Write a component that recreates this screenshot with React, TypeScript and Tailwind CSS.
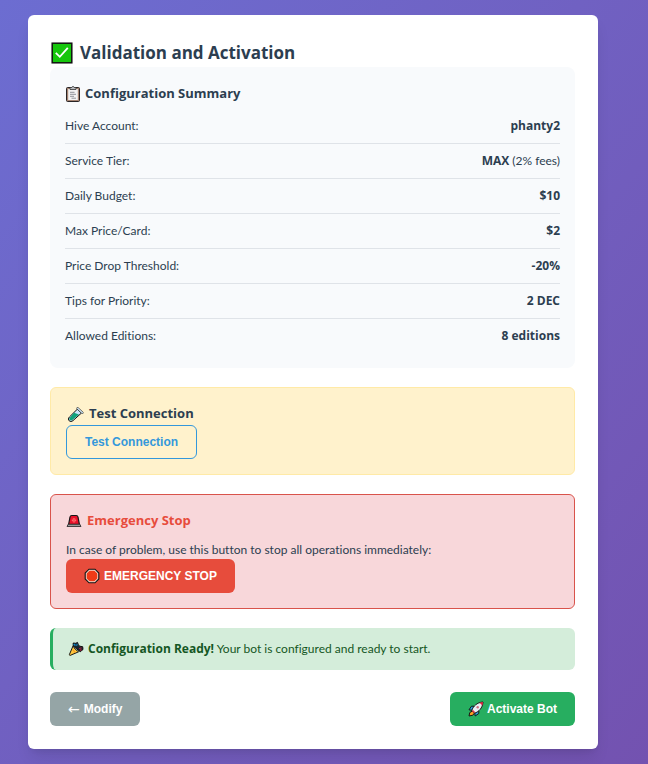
import type { ReactNode } from 'react';

const summary: { label: string; value: ReactNode }[] = [
  { label: 'Hive Account:', value: <Strong>phanty2</Strong> },
  { label: 'Service Tier:', value: <><Strong>MAX</Strong> (2% fees)</> },
  { label: 'Daily Budget:', value: <Strong>$10</Strong> },
  { label: 'Max Price/Card:', value: <Strong>$2</Strong> },
  { label: 'Price Drop Threshold:', value: <Strong>-20%</Strong> },
  { label: 'Tips for Priority:', value: <Strong>2 DEC</Strong> },
  { label: 'Allowed Editions:', value: <Strong>8 editions</Strong> },
];

function Strong({ children }: { children: ReactNode }) {
  return <strong className="font-['Segoe_UI','Open_Sans',sans-serif] font-bold">{children}</strong>;
}

function CheckIcon() {
  return (
    <svg viewBox="0 0 22 22" className="size-[22px] shrink-0" aria-hidden="true">
      <rect x="1.2" y="1.2" width="19.6" height="19.6" fill="#16c60c" stroke="#111" strokeWidth="1.5" />
      <path d="m4.8 10.8 4 4 8-9" fill="none" stroke="#fff" strokeWidth="1.8" />
    </svg>
  );
}

function ClipboardIcon() {
  return (
    <svg viewBox="0 0 16 18" className="h-[18px] w-4 shrink-0" aria-hidden="true">
      <rect x="1.5" y="2.5" width="13" height="14" rx="1" fill="#a58472" stroke="#282425" />
      <rect x="3.2" y="4" width="9.6" height="11" fill="#f3f3f3" />
      <path d="M5 3.8V2.5h1.6a1.5 1.5 0 0 1 2.8 0H11v2H5z" fill="#b9bcc0" stroke="#363636" strokeWidth=".8" />
      <path d="M5 7.3h4.5M5 9.3h6M5 11.3h4M6.5 13.2H11" stroke="#85888e" strokeWidth=".9" />
    </svg>
  );
}

function TubeIcon() {
  return (
    <svg viewBox="0 0 18 17" className="h-[17px] w-[18px] shrink-0" aria-hidden="true">
      <path d="M11.5 3 15.5 7 7 14.6c-1.3 1.1-2.8 1.1-3.8.2s-1-2.6.2-3.8z" fill="#c9e5fb" stroke="#111" />
      <path d="m8 6.8 5 1.6-6.3 5.4c-1.1.9-2.2.9-2.9.2s-.7-1.7.2-2.6z" fill="#10a27b" />
      <path d="m11.6 2.2 4.8 4.6" stroke="#111" strokeWidth="2.2" strokeLinecap="round" />
      <path d="m11.6 2.2 4.8 4.6" stroke="#d8eeff" strokeWidth="1.2" strokeLinecap="round" />
    </svg>
  );
}

function SirenIcon() {
  return (
    <svg viewBox="0 0 16 14" className="h-3.5 w-4 shrink-0" aria-hidden="true">
      <path d="M2.6 10.5 4 3Q4.3 1.5 5.8 1.5h4.4q1.5 0 1.8 1.5l1.4 7.5z" fill="#e8122b" stroke="#151515" strokeWidth="1.2" />
      <path d="M8 4v4.4M5.8 6.2h4.4" stroke="#ff6c6c" strokeWidth="1.4" />
      <path d="m6.5 4.7 3 3m0-3-3 3" stroke="#f84b54" strokeWidth=".8" />
      <path d="M2.2 10.2h11.6l1.2 2.3H1z" fill="#9b9b9b" stroke="#222" strokeWidth=".8" />
    </svg>
  );
}

function StopIcon() {
  return (
    <svg viewBox="0 0 16 16" className="size-4 shrink-0" aria-hidden="true">
      <path d="M5 1.2h6L14.8 5v6L11 14.8H5L1.2 11V5z" fill="#f5dcd0" stroke="#111" strokeWidth="1.1" />
      <path d="M5.6 2.7h4.8l2.9 2.9v4.8l-2.9 2.9H5.6l-2.9-2.9V5.6z" fill="#f03a17" />
    </svg>
  );
}

function PartyIcon() {
  return (
    <svg viewBox="0 0 16 16" className="size-4 shrink-0" aria-hidden="true">
      <path d="m5.2 2 2.6.3 1.7-.9.9 2.5 1.3 1.3 3 .5.3 2.8-2.8 2.2L5.2 5z" fill="#17232d" stroke="#111" strokeLinejoin="round" />
      <path d="M5.8 3 7.5 4.5" stroke="#0c8bc9" strokeWidth="1.6" />
      <path d="m8.4 5 .9-2.3" stroke="#156b9c" strokeWidth="1.4" />
      <path d="m11 7.8 2.6-1M12 9.4l1.5-.8" stroke="#a51b3d" strokeWidth="1.2" />
      <path d="M5 5Q6.8 8.8 10.6 10.8L2.2 14.4Q1.3 14.4 1.4 13.5z" fill="#ffc83d" stroke="#181818" />
      <path d="m4.6 8.5 2.6 3.2" stroke="#f59b23" strokeWidth="1.1" />
    </svg>
  );
}

function RocketIcon() {
  return (
    <svg viewBox="0 0 16 16" className="size-4 shrink-0" aria-hidden="true">
      <path d="M4.5 10 1.8 11.5 1 15l3.8-.8L6.5 12z" fill="#ff9d22" stroke="#161616" />
      <path d="M6 5.2H3.5L1 8.8l3.4.5zM10.8 10v2.5L7.2 15l-.5-3.4z" fill="#28a5de" stroke="#161616" />
      <path d="M3.8 9.3C5.2 5.5 8.7 1.4 15 1c-.4 6.3-4.5 9.8-8.3 11.2z" fill="#e9eef3" stroke="#161616" />
      <path d="M11.5 1.7 15 1l-.7 3.5z" fill="#e81f3d" />
      <circle cx="9.7" cy="6.3" r="1.2" fill="#d36d80" />
      <path d="m4.5 9.5 2 2" stroke="#e53346" strokeWidth="1.6" />
    </svg>
  );
}

export default function App() {
  return (
    <div className="flow-root min-h-screen bg-linear-to-br from-[#6c6dd1] to-[#7352b0] font-['Segoe_UI',Lato,sans-serif] text-xs text-[#2c3e50] [font-variant-ligatures:none]">
      <main className="mt-[15px] mr-[50px] mb-[15px] ml-7 rounded-md bg-white pt-6 pr-[23px] pb-[23px] pl-[22px] shadow-lg">
        <h1 className="flex h-7 items-center gap-[7px] pl-px font-['Segoe_UI','Open_Sans',sans-serif] text-[17px] font-bold">
          <CheckIcon />
          Validation and Activation
        </h1>

        <section className="rounded-lg bg-[#f8fafc] px-[15px] pt-4 pb-[15px]">
          <h2 className="flex h-[22px] items-center gap-1 font-['Segoe_UI','Open_Sans',sans-serif] text-[13px] font-bold">
            <ClipboardIcon />
            Configuration Summary
          </h2>
          <dl className="mt-1">
            {summary.map(({ label, value }) => (
              <div key={label} className="flex justify-between border-b border-[#dfe3e8] py-2 leading-[18px] last:border-b-0">
                <dt>{label}</dt>
                <dd>{value}</dd>
              </div>
            ))}
          </dl>
        </section>

        <section className="mt-[19px] rounded-md border border-[#ffeaa7] bg-[#fff2cc] p-[15px]">
          <h2 className="flex h-[22px] items-center gap-[5px] font-['Segoe_UI','Open_Sans',sans-serif] text-[13px] font-bold">
            <TubeIcon />
            Test Connection
          </h2>
          <button type="button" className="h-[34px] rounded-md border border-[#3498db] px-[18px] font-['Liberation_Sans',sans-serif] font-bold text-[#3498db]">
            Test Connection
          </button>
        </section>

        <section className="mt-[19px] rounded-md border border-[#d9534b] bg-[#f8d7da] p-[15px]">
          <h2 className="flex h-[22px] items-center gap-[5px] font-['Segoe_UI','Open_Sans',sans-serif] text-[13px] font-bold text-[#e74c3c]">
            <SirenIcon />
            Emergency Stop
          </h2>
          <p className="mt-2 leading-[19px]">In case of problem, use this button to stop all operations immediately:</p>
          <button type="button" className="flex h-[34px] items-center gap-1 rounded-md bg-[#e74c3c] px-[18px] font-['Liberation_Sans',sans-serif] font-bold text-white">
            <StopIcon />
            EMERGENCY STOP
          </button>
        </section>

        <div role="status" className="mt-[19px] flex h-[42px] items-center gap-1 rounded-md border-l-3 border-[#27ae60] bg-[#d4edda] px-[15px] text-[#155724]">
          <PartyIcon />
          <p><Strong>Configuration Ready!</Strong> Your bot is configured and ready to start.</p>
        </div>

        <div className="mt-[22px] flex justify-between font-['Liberation_Sans',sans-serif] font-bold text-white">
          <button type="button" className="flex h-[34px] items-center gap-1 rounded-md bg-[#95a5a6] px-[18px]">
            <span className="font-['DejaVu_Sans',sans-serif] text-sm font-normal">←</span>
            Modify
          </button>
          <button type="button" className="flex h-[34px] items-center gap-[3px] rounded-md bg-[#27ae60] px-[18px]">
            <RocketIcon />
            Activate Bot
          </button>
        </div>
      </main>
    </div>
  );
}
